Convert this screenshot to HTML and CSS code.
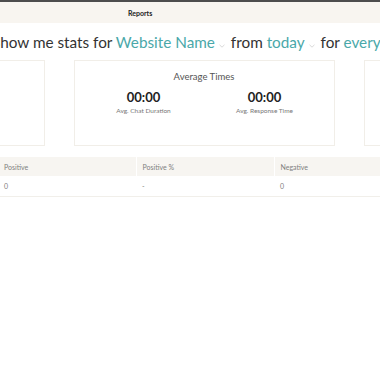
FILE: index.html
```html
<!DOCTYPE html>
<html lang="en">
<head>
  <meta charset="UTF-8">
  <meta name="viewport" content="width=device-width, initial-scale=1">
  <title>Reports</title>
  <link rel="stylesheet" href="styles.css">
</head>
<body>
  <div class="topbar">
    <span class="tab">Reports</span>
  </div>

  <h2 class="query">
    Show me stats for <span class="pick">Website Name</span><svg class="caret" viewBox="0 0 6 4"><path d="M0.5 0.8 L3 3.2 L5.5 0.8"/></svg>
    from <span class="pick">today</span><svg class="caret" viewBox="0 0 6 4"><path d="M0.5 0.8 L3 3.2 L5.5 0.8"/></svg>
    for <span class="pick">everyone</span><svg class="caret" viewBox="0 0 6 4"><path d="M0.5 0.8 L3 3.2 L5.5 0.8"/></svg>
  </h2>

  <div class="cards">
    <div class="card"></div>
    <div class="card">
      <div class="card-title">Average Times</div>
      <div class="stats">
        <div class="stat">
          <div class="stat-value">00:00</div>
          <div class="stat-label">Avg. Chat Duration</div>
        </div>
        <div class="stat">
          <div class="stat-value">00:00</div>
          <div class="stat-label">Avg. Response Time</div>
        </div>
      </div>
    </div>
    <div class="card"></div>
  </div>

  <table class="results">
    <thead>
      <tr>
        <th>Positive</th>
        <th>Positive %</th>
        <th>Negative</th>
      </tr>
    </thead>
    <tbody>
      <tr>
        <td>0</td>
        <td>-</td>
        <td>0</td>
      </tr>
    </tbody>
  </table>
</body>
</html>
```

FILE: styles.css
```css
body {
  margin: 0;
  overflow: hidden;
  font-family: "Lato", "Noto Sans", sans-serif;
  color: #333;
  background: #fff;
}
.topbar {
  border-top: 2px solid #4d4d4d;
  background: #f8f5f0;
  height: 21px;
  display: flex;
  align-items: center;
}
.tab {
  margin-left: 128px;
  font-size: 7px;
  font-weight: bold;
  color: #222;
}
.query {
  margin: 9px 0 0 -8px;
  white-space: nowrap;
  font-size: 15.3px;
  font-weight: normal;
  line-height: 20px;
  color: #333;
}
.pick {
  color: #4aa8a9;
}
.caret {
  width: 6px;
  height: 4px;
  margin: 0 2px 0 4px;
  fill: none;
  stroke: #cfcfcf;
  stroke-width: 0.8;
}
.cards {
  display: flex;
  gap: 29px;
  margin: 8px 0 0 -216px;
}
.card {
  flex: 0 0 261px;
  height: 86px;
  box-sizing: border-box;
  border: 1px solid #f1eee8;
  padding: 10px 9px 0 8px;
  text-align: center;
}
.card-title {
  font-size: 9.5px;
  color: #555;
}
.stats {
  display: grid;
  grid-template-columns: 1fr 1fr;
  margin-top: 7px;
}
.stat-value {
  font-size: 13px;
  font-weight: bold;
  color: #222;
}
.stat-label {
  margin-top: 2px;
  font-size: 6.5px;
  color: #777;
}
.results {
  margin: 11px 0 0 -2px;
  border-collapse: collapse;
  table-layout: fixed;
  width: 414px;
}
.results th,
.results td {
  width: 138px;
  box-sizing: border-box;
  padding: 0 6px;
  text-align: left;
  font-size: 7px;
  font-weight: normal;
  color: #808080;
}
.results th {
  height: 19px;
  background: #f7f5f1;
  border-left: 1px solid #fff;
}
.results th:first-child {
  border-left: none;
}
.results td {
  height: 20px;
  border-bottom: 1px solid #f1efea;
}
```
